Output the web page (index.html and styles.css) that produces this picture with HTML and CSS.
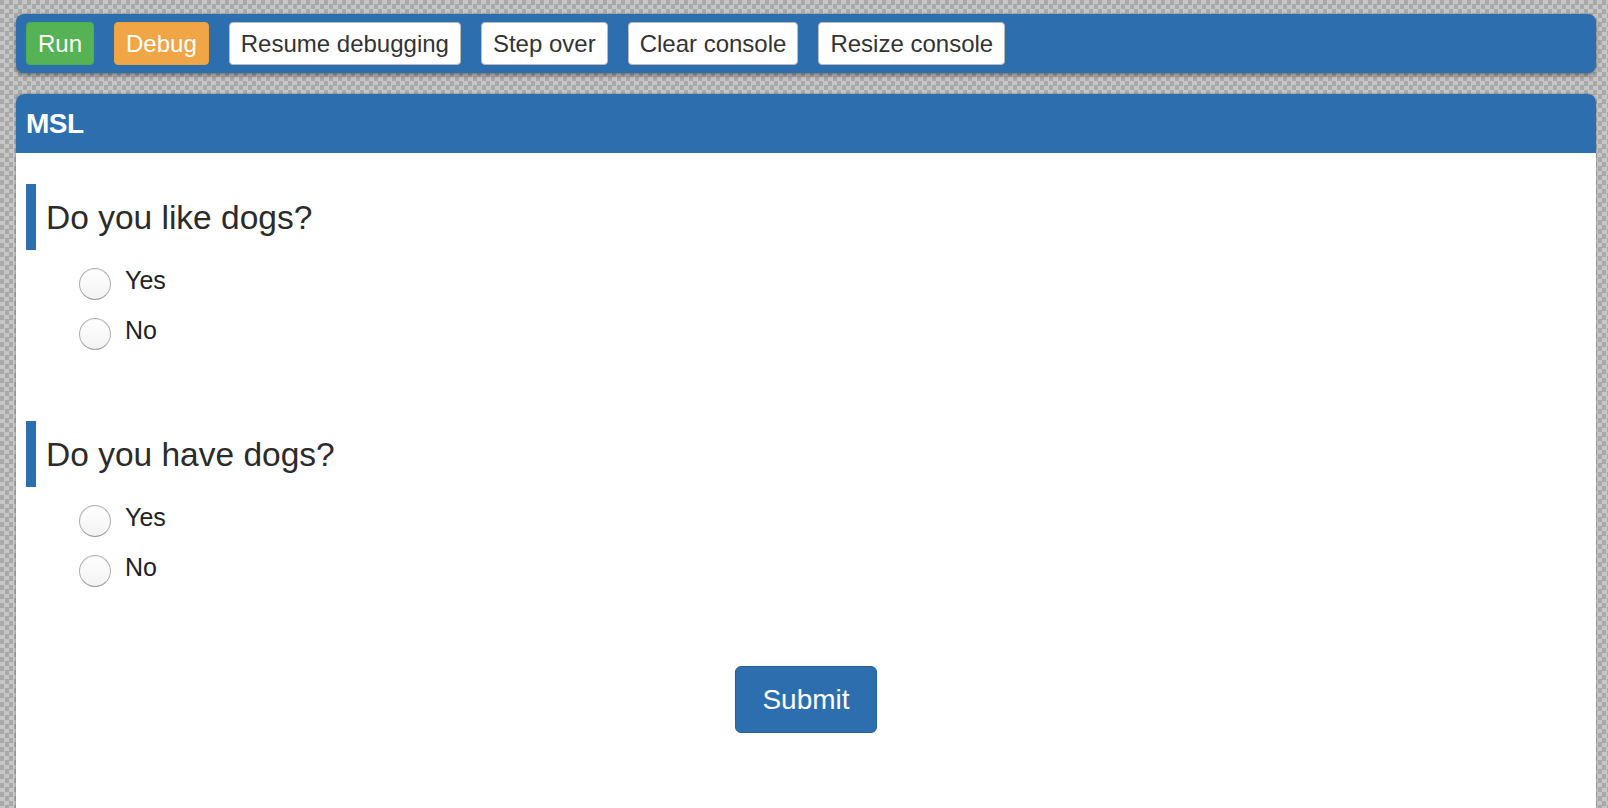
FILE: index.html
```html
<!DOCTYPE html>
<html lang="en">
<head>
<meta charset="utf-8">
<title>MSL</title>
<link rel="stylesheet" href="styles.css">
</head>
<body>
<div class="page">
  <div class="toolbar">
    <button class="btn btn-run">Run</button>
    <button class="btn btn-debug">Debug</button>
    <button class="btn btn-plain">Resume debugging</button>
    <button class="btn btn-plain">Step over</button>
    <button class="btn btn-plain">Clear console</button>
    <button class="btn btn-plain">Resize console</button>
  </div>
  <div class="panel">
    <div class="panel-header">MSL</div>
    <div class="panel-body">
      <div class="question">
        <div class="q-title">Do you like dogs?</div>
        <div class="options">
          <label class="option"><input type="radio" name="q1"><span>Yes</span></label>
          <label class="option"><input type="radio" name="q1"><span>No</span></label>
        </div>
      </div>
      <div class="question">
        <div class="q-title">Do you have dogs?</div>
        <div class="options">
          <label class="option"><input type="radio" name="q2"><span>Yes</span></label>
          <label class="option"><input type="radio" name="q2"><span>No</span></label>
        </div>
      </div>
      <div class="actions">
        <button class="submit">Submit</button>
      </div>
    </div>
  </div>
</div>
</body>
</html>
```
FILE: styles.css
```css
html, body {
  margin: 0;
  height: 100%;
  overflow: hidden;
}
body {
  font-family: "Liberation Sans", Arial, Helvetica, sans-serif;
  color: #333;
}
.page {
  min-height: 100%;
  box-sizing: border-box;
  padding: 14px 12px 0 16px;
  background:
    conic-gradient(#c6c6c6 0 25%, #a9a9a9 0 50%, #c6c6c6 0 75%, #a9a9a9 0) 0 0 / 9px 9px;
}
.toolbar {
  background: #2d6fae;
  border-radius: 8px;
  padding: 8px 10px;
  display: flex;
  gap: 20px;
  box-shadow: 0 2px 4px rgba(0,0,0,0.45);
}
.btn {
  height: 43px;
  box-sizing: border-box;
  font-family: "Liberation Sans", Arial, Helvetica, sans-serif;
  font-size: 24px;
  line-height: 1;
  padding: 0 11px;
  border-radius: 4px;
  border: 1px solid #bbb;
  background: #fff;
  color: #333;
}
.btn-run {
  background: #55b255;
  border-color: #4cae4c;
  color: #fff;
}
.btn-debug {
  background: #f0a646;
  border-color: #eea236;
  color: #fff;
}
.panel {
  margin-top: 21px;
  background: #fff;
  border-radius: 8px 8px 0 0;
  box-shadow: 0 0 2px rgba(0,0,0,0.5);
  min-height: 760px;
}
.panel-header {
  background: #2d6fae;
  color: #fff;
  font-weight: bold;
  font-size: 28px;
  height: 59px;
  display: flex;
  align-items: center;
  padding-left: 10px;
  border-radius: 8px 8px 0 0;
  letter-spacing: -0.5px;
}
.panel-body {
  padding: 31px 10px 0 10px;
}
.question {
  margin-bottom: 71px;
}
.q-title {
  border-left: 10px solid #2d6fae;
  height: 66px;
  display: flex;
  align-items: center;
  padding-left: 10px;
  padding-top: 2px;
  box-sizing: border-box;
  font-size: 33.5px;
  color: #2b2b2b;
}
.options {
  margin-top: 18px;
  padding-left: 53px;
  display: flex;
  flex-direction: column;
  gap: 18px;
}
.option {
  display: flex;
  align-items: center;
  height: 32px;
  font-size: 25px;
  color: #222;
}
.option span {
  margin-top: -7px;
}
.option input {
  appearance: none;
  -webkit-appearance: none;
  margin: 0 14px 0 0;
  width: 32px;
  height: 32px;
  border-radius: 50%;
  border: 1px solid #b0b0b0;
  border-bottom-color: #9a9a9a;
  background: linear-gradient(#ffffff, #f3f3f3);
  box-shadow: inset 0 1px 1px rgba(0,0,0,0.06);
  box-sizing: border-box;
}
.actions {
  display: flex;
  justify-content: center;
  margin-top: 79px;
}
.submit {
  width: 142px;
  height: 67px;
  font-family: "Liberation Sans", Arial, Helvetica, sans-serif;
  font-size: 28px;
  color: #fff;
  background: #2d6fae;
  border: 1px solid #255f96;
  border-radius: 6px;
}
```
